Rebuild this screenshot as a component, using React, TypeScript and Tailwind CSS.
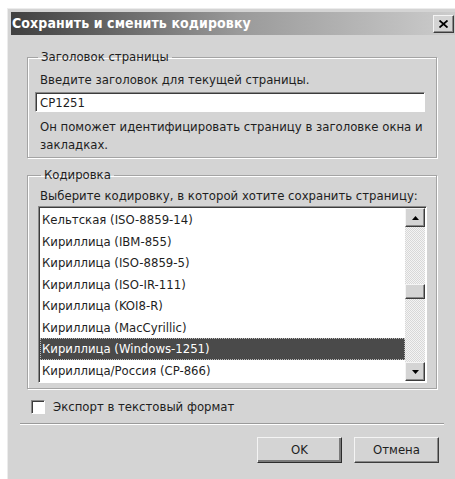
import React, { useState } from "react";

const encodings = [
  "Кельтская (ISO-8859-14)",
  "Кириллица (IBM-855)",
  "Кириллица (ISO-8859-5)",
  "Кириллица (ISO-IR-111)",
  "Кириллица (KOI8-R)",
  "Кириллица (MacCyrillic)",
  "Кириллица (Windows-1251)",
  "Кириллица/Россия (CP-866)",
];

const raised =
  "border border-t-[#f4f4f4] border-l-[#f4f4f4] border-r-[#3c3c3c] border-b-[#3c3c3c] shadow-[inset_-1px_-1px_0_#8a8a8a]";
const sunken =
  "border border-t-[#8a8a8a] border-l-[#8a8a8a] border-r-white border-b-white shadow-[inset_1px_1px_0_#3c3c3c]";

function ScrollButton({ up }: { up?: boolean }) {
  return (
    <div className={`h-[19px] w-[20px] bg-[#d4d4d4] flex items-center justify-center ${raised}`}>
      <svg width="7" height="4" viewBox="0 0 7 4">
        {up ? <path d="M3.5 0 L7 4 L0 4 Z" fill="#000" /> : <path d="M0 0 L7 0 L3.5 4 Z" fill="#000" />}
      </svg>
    </div>
  );
}

export default function App() {
  const [title, setTitle] = useState("CP1251");
  const [selected, setSelected] = useState(6);
  const [exportText, setExportText] = useState(false);

  return (
    <div className="h-[479px] w-[455px] overflow-hidden bg-white pt-[8px] pl-[7px] font-['DejaVu_Sans_Condensed','DejaVu_Sans',sans-serif] text-[13px] text-[#1e1e1e]">
      <div className="w-[460px] h-[480px] bg-[#d4d4d4] border-l border-t border-[#ececec] pt-[3px] pl-[3px]">
        {/* title bar */}
        <div className="h-[23px] flex items-center bg-gradient-to-r from-[#404040] via-[#9a9a9a] to-[#cfcfcf] pl-[1px]">
          <span className="font-bold text-white text-[14px] tracking-[0.1px]">Сохранить и сменить кодировку</span>
          <div className={`ml-[auto] mr-[13px] h-[18px] w-[21px] bg-[#d4d4d4] flex items-center justify-center ${raised}`}>
            <svg width="9" height="8" viewBox="0 0 9 8">
              <path d="M0.5 0.5 L8.5 7.5 M8.5 0.5 L0.5 7.5" stroke="#000" strokeWidth="1.8" />
            </svg>
          </div>
        </div>

        <div className="pl-[16px] pt-[13px]">
          <fieldset className="w-[410px] border border-[#a4a4a4] shadow-[1px_1px_0_#fff,inset_1px_1px_0_#fff] px-[7px] pb-[3px]">
            <legend className="ml-[3px] px-[3px] leading-[18px]">Заголовок страницы</legend>
            <p className="mt-[5px] pl-[5px] leading-[18px]">Введите заголовок для текущей страницы.</p>
            <input
              value={title}
              onChange={(e) => setTitle(e.target.value)}
              className={`mt-[3px] block h-[20px] w-[390px] bg-white pl-[4px] outline-none ${sunken}`}
            />
            <p className="mt-[6px] pl-[5px] leading-[18px]">
              Он поможет идентифицировать страницу в заголовке окна и закладках.
            </p>
          </fieldset>

          <fieldset className="mt-[8px] w-[410px] border border-[#a4a4a4] shadow-[1px_1px_0_#fff,inset_1px_1px_0_#fff] pl-[10px] pb-[5px]">
            <legend className="ml-[3px] px-[3px] leading-[18px]">Кодировка</legend>
            <p className="mt-[3px] pl-[2px] leading-[18px]">Выберите кодировку, в которой хотите сохранить страницу:</p>
            <div className={`mt-[1px] flex h-[177px] w-[389px] bg-white p-[1px] ${sunken}`}>
              <ul className="flex-1 pt-[1px]">
                {encodings.map((name, i) => (
                  <li
                    key={name}
                    onClick={() => setSelected(i)}
                    className={`h-[21.5px] leading-[21px] pl-[2px] whitespace-nowrap ${
                      i === selected ? "bg-[#4a4a4a] text-white outline-1 outline-dotted outline-[#bbbbbb] -outline-offset-1" : ""
                    }`}
                  >
                    {name}
                  </li>
                ))}
              </ul>
              <div className="flex w-[20px] flex-col bg-[repeating-conic-gradient(#d8d8d8_0_25%,#f4f4f4_0_50%)] bg-[length:2px_2px]">
                <ScrollButton up />
                <div className="h-[57px]" />
                <div className={`h-[15px] w-[20px] bg-[#d4d4d4] ${raised}`} />
                <div className="flex-1" />
                <ScrollButton />
              </div>
            </div>
          </fieldset>

          <label className="mt-[9px] ml-[4px] flex items-center gap-[8px] leading-[18px]">
            <span
              onClick={() => setExportText(!exportText)}
              className={`h-[14px] w-[14px] bg-white flex items-center justify-center ${sunken}`}
            >
              {exportText && (
                <svg width="8" height="8" viewBox="0 0 8 8">
                  <path d="M1 4 L3 6 L7 1" stroke="#000" strokeWidth="1.6" fill="none" />
                </svg>
              )}
            </span>
            Экспорт в текстовый формат
          </label>
        </div>

        <div className="mt-[7px] ml-[9px] w-[424px] h-[2px] border-t border-[#9a9a9a] border-b border-b-white" />

        <div className="mt-[12px] ml-[246px] flex gap-[12px]">
          <button className="h-[26px] w-[85px] bg-[#d4d4d4] border border-t-[#f4f4f4] border-l-[#f4f4f4] border-r-[#2c2c2c] border-b-[#2c2c2c] shadow-[inset_-2px_-2px_0_#7a7a7a]">
            OK
          </button>
          <button className={`h-[26px] w-[85px] bg-[#d4d4d4] ${raised}`}>Отмена</button>
        </div>
      </div>
    </div>
  );
}
